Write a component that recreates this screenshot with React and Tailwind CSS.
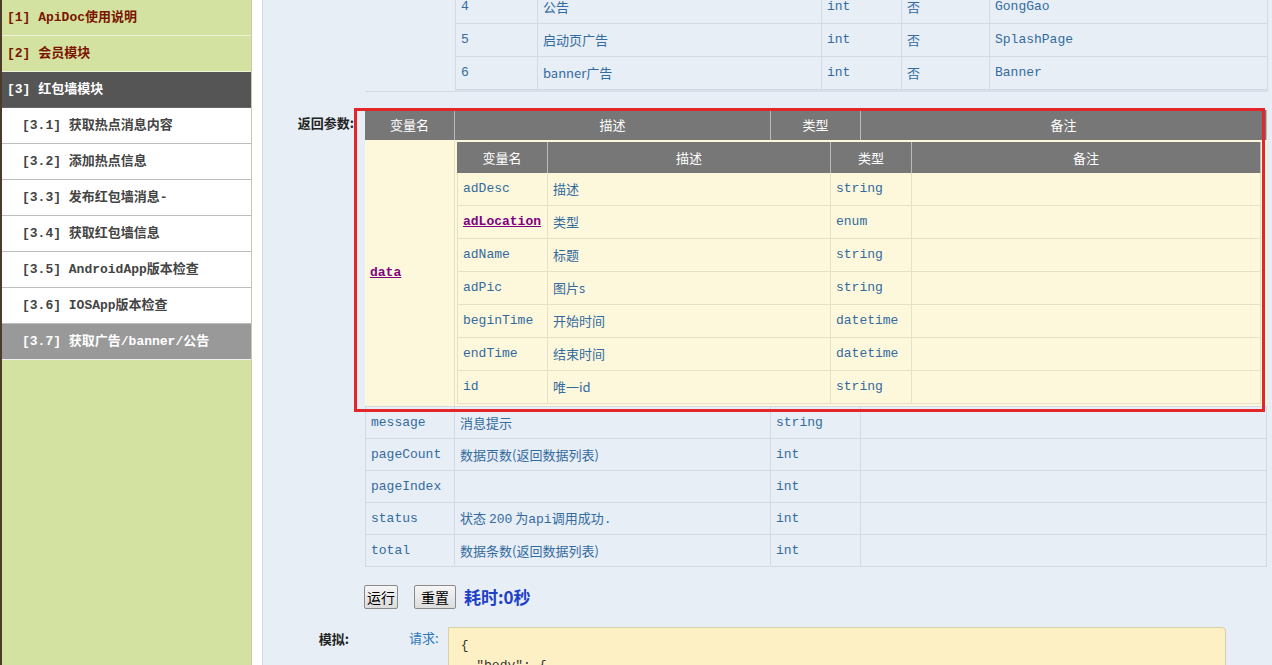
import React from 'react'

const mono = { fontFamily: '"Liberation Mono", "Noto Sans CJK SC", monospace' }

const navItems = [
  { label: '[1] ApiDoc使用说明', kind: 'top' },
  { label: '[2] 会员模块', kind: 'top' },
  { label: '[3] 红包墙模块', kind: 'open' },
  { label: '[3.1] 获取热点消息内容', kind: 'sub' },
  { label: '[3.2] 添加热点信息', kind: 'sub' },
  { label: '[3.3] 发布红包墙消息-', kind: 'sub' },
  { label: '[3.4] 获取红包墙信息', kind: 'sub' },
  { label: '[3.5] AndroidApp版本检查', kind: 'sub' },
  { label: '[3.6] IOSApp版本检查', kind: 'sub' },
  { label: '[3.7] 获取广告/banner/公告', kind: 'active' },
]

const navClass = {
  top: 'bg-[#d3e2a0] text-[#7b1400] pl-[5px] border-b border-[#eef3d8]',
  open: 'bg-[#555555] text-white pl-[5px] border-b border-[#666]',
  sub: 'bg-white text-[#444] pl-[20px] border-b border-[#bdbdbd]',
  active: 'bg-[#999999] text-white pl-[20px] border-b border-[#f0f0f0]',
}

const enumRows = [
  ['4', '公告', 'int', '否', 'GongGao'],
  ['5', '启动页广告', 'int', '否', 'SplashPage'],
  ['6', 'banner广告', 'int', '否', 'Banner'],
]

const dataRows = [
  ['adDesc', '描述', 'string'],
  ['adLocation', '类型', 'enum', true],
  ['adName', '标题', 'string'],
  ['adPic', '图片s', 'string'],
  ['beginTime', '开始时间', 'datetime'],
  ['endTime', '结束时间', 'datetime'],
  ['id', '唯一id', 'string'],
]

const outerRows = [
  ['message', '消息提示', 'string'],
  ['pageCount', '数据页数(返回数据列表)', 'int'],
  ['pageIndex', '', 'int'],
  ['status', '状态 200 为api调用成功.', 'int'],
  ['total', '数据条数(返回数据列表)', 'int'],
]

const cell = 'flex items-center px-[5px] border-r border-b border-[#d2dbe5] shrink-0'
const ycell = 'flex items-center px-[5px] border-r border-b border-[#e6e0c4] shrink-0'

const Sidebar = () => (
  <div className="flex shrink-0 h-full">
    <div className="w-[2px] bg-[#4b3b2b]" />
    <div className="w-[250px] bg-[#d3e2a0] border-r border-[#c4c9b0]">
      {navItems.map((item, i) => (
        <div key={i} className={`h-[36px] flex items-center text-[13px] font-bold ${navClass[item.kind]}`} style={mono}>
          {item.label}
        </div>
      ))}
    </div>
    <div className="w-[10px] bg-white" />
  </div>
)

const HeadCell = ({ w, children }) => (
  <div className={`${w} flex items-center justify-center border-r border-[#bbbbbb] text-white text-[13px] shrink-0`}>{children}</div>
)

const App = () => {
  return (
    <div className="flex h-[665px] w-[1272px] overflow-hidden bg-white text-[13px]" style={{ fontFamily: '"Noto Sans CJK SC", sans-serif' }}>
      <Sidebar />
      <div className="relative flex-1 bg-[#e7eef6] border-l border-[#d0d9e4] pr-[4px] overflow-hidden">
        {/* top enum table, scrolled */}
        <div className="flex -mt-[9px]">
          <div className="w-[91px] ml-[102px] border-r border-b border-[#d2dbe5] shrink-0" />
          <div className="flex flex-col text-[#336b9e] border-b-2 border-[#d7dfe8]">
            {enumRows.map((r, i) => (
              <div key={i} className="flex h-[33px]">
                <div className={`${cell} w-[82px]`} style={mono}>{r[0]}</div>
                <div className={`${cell} w-[284px]`}>{r[1]}</div>
                <div className={`${cell} w-[80px]`} style={mono}>{r[2]}</div>
                <div className={`${cell} w-[88px]`}>{r[3]}</div>
                <div className={`${cell} w-[278px]`} style={mono}>{r[4]}</div>
              </div>
            ))}
          </div>
        </div>

        {/* return params */}
        <div className="flex mt-[18px]">
          <div className="w-[91px] text-right font-bold text-[#222] pt-[3px] shrink-0">返回参数:</div>
          <div className="ml-[11px] w-[902px]">
            <div className="flex h-[30px] bg-[#777777]">
              <HeadCell w="w-[90px]">变量名</HeadCell>
              <HeadCell w="w-[316px]">描述</HeadCell>
              <HeadCell w="w-[90px]">类型</HeadCell>
              <HeadCell w="w-[406px]">备注</HeadCell>
            </div>
            <div className="flex bg-[#fdf7dc] border-b border-[#d2dbe5]">
              <div className="w-[90px] shrink-0 flex items-center px-[5px] border-r border-[#e6e0c4]">
                <a className="text-[#800080] font-bold underline" style={mono}>data</a>
              </div>
              <div className="p-[2px] pr-[4px]">
                <div className="flex h-[31px] bg-[#777777]">
                  <HeadCell w="w-[91px]">变量名</HeadCell>
                  <HeadCell w="w-[283px]">描述</HeadCell>
                  <HeadCell w="w-[81px]">类型</HeadCell>
                  <HeadCell w="w-[349px]">备注</HeadCell>
                </div>
                {dataRows.map((r, i) => (
                  <div key={i} className="flex h-[33px] text-[#336b9e]">
                    <div className={`${ycell} w-[91px] border-l`} style={mono}>
                      {r[3] ? <a className="text-[#800080] font-bold underline">{r[0]}</a> : r[0]}
                    </div>
                    <div className={`${ycell} w-[283px]`}>{r[1]}</div>
                    <div className={`${ycell} w-[81px]`} style={mono}>{r[2]}</div>
                    <div className={`${ycell} w-[349px]`} />
                  </div>
                ))}
              </div>
            </div>
            {outerRows.map((r, i) => (
              <div key={i} className="flex h-[32px] text-[#336b9e]">
                <div className={`${cell} w-[90px] border-l`} style={mono}>{r[0]}</div>
                <div className={`${cell} w-[316px]`}>
                  <span className="whitespace-pre">
                    {r[1].split(/(200|api|\.)/).map((p, j) =>
                      p === '200' || p === 'api' || p === '.' ? <span key={j} style={mono}>{p}</span> : <span key={j}>{p}</span>
                    )}
                  </span>
                </div>
                <div className={`${cell} w-[90px]`} style={mono}>{r[2]}</div>
                <div className={`${cell} w-[406px]`} />
              </div>
            ))}
          </div>
        </div>

        {/* buttons */}
        <div className="flex items-center mt-[17px] ml-[101px]">
          <button className="h-[24px] w-[34px] border border-[#8a8a8a] rounded-[2px] bg-gradient-to-b from-[#f6f6f6] to-[#dcdcdc] text-[14px] text-black leading-none">运行</button>
          <button className="h-[24px] w-[42px] ml-[16px] border border-[#8a8a8a] rounded-[2px] bg-gradient-to-b from-[#f6f6f6] to-[#dcdcdc] text-[14px] text-black leading-none">重置</button>
          <span className="text-[17px] font-bold text-[#2140c8] ml-[8px]">耗时:0秒</span>
        </div>

        {/* simulate */}
        <div className="flex mt-[17px]">
          <div className="w-[86px] text-right font-bold text-[#222] pt-[2px] shrink-0">模拟:</div>
          <div className="ml-[60px] text-[#2f78b8] pt-[1px] shrink-0">请求:</div>
          <div className="ml-[9px] w-[778px] h-[60px] bg-[#fdf0c4] border border-[#d8d0a8] rounded-tr-[4px] pl-[12px] pt-[8px] text-[#333] leading-[20px] whitespace-pre" style={mono}>
            <div>{'{'}</div>
            <div>{'  "body": {'}</div>
          </div>
        </div>

        {/* annotation box */}
        <div className="absolute left-[91px] top-[108px] w-[911px] h-[304px] border-[3px] border-[#e3262a] pointer-events-none" />
      </div>
    </div>
  )
}

export default App
